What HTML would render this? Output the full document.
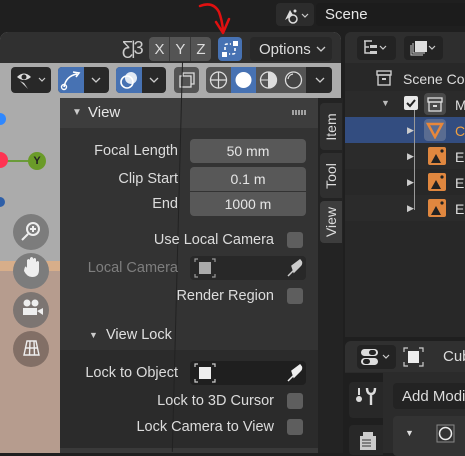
<!DOCTYPE html>
<html><head><meta charset="utf-8"><style>
*{margin:0;padding:0;box-sizing:border-box}
body{width:465px;height:453px;overflow:hidden;background:#1f1f1f;font-family:"Liberation Sans","DejaVu Sans",sans-serif;font-size:14px;color:#e0e0e0;position:relative}
.a{position:absolute}
.btn{position:absolute;border-radius:4px}
.lbl{position:absolute;text-align:right;color:#dcdcdc;font-size:14.5px}
.fld{position:absolute;background:#585858;color:#e6e6e6;text-align:center;font-size:14px;line-height:24px}
.chk{position:absolute;width:16px;height:16px;background:#5e5e5e;border-radius:3px}
.tab{position:absolute;left:320px;width:22px;background:#2f2f2f;border-radius:4px 0 0 4px}
.tab span{position:absolute;left:50%;top:50%;transform:translate(-50%,-50%) rotate(-90deg);font-size:14px;color:#ddd;white-space:nowrap}
.orow{position:absolute;left:345px;width:120px;height:26px}
.oic{position:absolute;width:18px;height:18px;background:#e0873f;border-radius:2px}
</style></head><body>
<div class="a" style="left:0;top:0;width:465px;height:31px;background:#1f1f1f"></div>
<div class="btn" style="left:276px;top:3px;width:38px;height:23px;background:#2c2c2c"></div>
<svg class="a" style="left:282px;top:5px" width="30" height="20"><path d="M3 15 L8 5 L11 10 Z" fill="#ddd"/><circle cx="11" cy="14" r="4" fill="none" stroke="#ddd" stroke-width="1.5"/><circle cx="13" cy="6" r="1.5" fill="#ddd"/><path d="M20 9 l3 3 l3 -3" fill="none" stroke="#ccc" stroke-width="1.2"/></svg>
<div class="btn" style="left:316px;top:3px;width:160px;height:23px;background:#1c1c1c;border-radius:4px 0 0 4px"></div>
<div class="a" style="left:325px;top:6px;font-size:15px;color:#e6e6e6">Scene</div>

<div class="a" style="left:0;top:32px;width:341px;height:421px;background:#ababab;border-radius:8px 8px 0 0;overflow:hidden">
  <div class="a" style="left:0;top:0;width:341px;height:31px;background:#303030"></div>
  <div class="a" style="left:0;top:238px;width:60px;height:200px;background:#b69c8e"></div>
  <div class="a" style="left:0;top:229px;width:60px;height:10px;background:#d7ae8a"></div>
</div>
<div class="a" style="left:122px;top:38px;font-size:18px;color:#ccc;letter-spacing:-2px">Ƹ|3</div>
<div class="btn" style="left:149px;top:37px;width:62px;height:24px;background:#545454"></div>
<div class="a" style="left:169px;top:37px;width:1px;height:24px;background:#3a3a3a"></div>
<div class="a" style="left:190px;top:37px;width:1px;height:24px;background:#3a3a3a"></div>
<div class="a" style="left:149px;top:41px;width:62px;font-size:15px;color:#ddd;display:flex;justify-content:space-around"><span>X</span><span>Y</span><span>Z</span></div>
<div class="btn" style="left:218px;top:37px;width:24px;height:24px;background:#4772b3"></div>
<svg class="a" style="left:218px;top:37px" width="24" height="24"><rect x="15" y="4" width="5" height="5" fill="#fff"/><rect x="4" y="15" width="5" height="5" fill="#fff"/><path d="M7 13 V9 Q7 7 9 7 H13 M17 11 V15 Q17 17 15 17 H11" fill="none" stroke="#fff" stroke-width="1.6" stroke-dasharray="3 2"/></svg>
<div class="btn" style="left:250px;top:37px;width:82px;height:24px;background:#282828"></div>
<div class="a" style="left:259px;top:41px;font-size:15px;color:#ddd">Options</div>
<svg class="a" style="left:316px;top:45px" width="10" height="8"><path d="M1 2 l4 4 l4 -4" fill="none" stroke="#ccc" stroke-width="1.3"/></svg>
<div class="btn" style="left:11px;top:67px;width:40px;height:26px;background:#282828"></div>
<svg class="a" style="left:14px;top:69px" width="36" height="22"><path d="M3 8 Q10 1 17 8 Q10 14 3 8Z" fill="#ddd"/><circle cx="10" cy="8" r="2.5" fill="#282828"/><path d="M6 12 L14 20 L10 14 Z" fill="#ddd"/><path d="M25 9 l3 3 l3 -3" fill="none" stroke="#ccc" stroke-width="1.2"/></svg>
<div class="btn" style="left:58px;top:67px;width:51px;height:26px;background:#282828"></div>
<div class="btn" style="left:58px;top:67px;width:26px;height:26px;background:#4772b3;border-radius:4px 0 0 4px"></div>
<svg class="a" style="left:58px;top:67px" width="26" height="26"><path d="M6 20 Q8 9 19 7" fill="none" stroke="#fff" stroke-width="1.6"/><path d="M15 5 L21 6 L18 10" fill="none" stroke="#fff" stroke-width="1.6"/><circle cx="6" cy="20" r="2.5" fill="none" stroke="#fff" stroke-width="1.4"/></svg>
<svg class="a" style="left:91px;top:76px" width="10" height="8"><path d="M1 2 l4 4 l4 -4" fill="none" stroke="#ccc" stroke-width="1.3"/></svg>
<div class="btn" style="left:116px;top:67px;width:50px;height:26px;background:#282828"></div>
<div class="btn" style="left:116px;top:67px;width:26px;height:26px;background:#4772b3;border-radius:4px 0 0 4px"></div>
<svg class="a" style="left:116px;top:67px" width="26" height="26"><circle cx="11" cy="15" r="6" fill="none" stroke="#fff" stroke-width="1.6"/><circle cx="15" cy="11" r="6" fill="#fff" opacity=".85"/></svg>
<svg class="a" style="left:149px;top:76px" width="10" height="8"><path d="M1 2 l4 4 l4 -4" fill="none" stroke="#ccc" stroke-width="1.3"/></svg>
<div class="btn" style="left:174px;top:67px;width:25px;height:26px;background:#545454"></div>
<svg class="a" style="left:174px;top:67px" width="25" height="26"><rect x="6" y="9" width="11" height="11" fill="none" stroke="#ddd" stroke-width="1.3"/><path d="M9 9 V6 H20 V17 H17" fill="none" stroke="#ddd" stroke-width="1.3"/></svg>
<div class="btn" style="left:206px;top:67px;width:126px;height:26px;background:#545454"></div>
<div class="a" style="left:231px;top:67px;width:25px;height:26px;background:#4772b3"></div>
<div class="a" style="left:306px;top:67px;width:26px;height:26px;background:#282828;border-radius:0 4px 4px 0"></div>
<svg class="a" style="left:206px;top:67px" width="126" height="26"><circle cx="12.5" cy="13" r="8" fill="none" stroke="#ddd" stroke-width="1.3"/><path d="M4.5 13 H20.5 M12.5 5 V21" stroke="#ddd" stroke-width="1.2"/><circle cx="37.5" cy="13" r="8" fill="#fff"/><circle cx="62.5" cy="13" r="8" fill="none" stroke="#ddd" stroke-width="1.3"/><path d="M62.5 5 A8 8 0 0 1 62.5 21 Z M54.5 13 H62.5" fill="#ddd" stroke="#ddd"/><circle cx="87.5" cy="13" r="8" fill="#444" stroke="#ddd" stroke-width="1.3"/><path d="M82 12 A6 6 0 0 1 87 7" stroke="#ddd" fill="none" stroke-width="1.3"/><path d="M110 11 l4 4 l4 -4" fill="none" stroke="#ccc" stroke-width="1.3"/></svg>

<div class="a" style="left:-6px;top:113px;width:12px;height:12px;border-radius:50%;background:#2f88ff"></div>
<div class="a" style="left:0;top:160px;width:30px;height:2px;background:#6a9b3a"></div>
<div class="a" style="left:-8px;top:152px;width:16px;height:16px;border-radius:50%;background:#ff3352"></div>
<div class="a" style="left:28px;top:152px;width:18px;height:18px;border-radius:50%;background:#6a9b28;color:#222;font-size:11px;text-align:center;line-height:18px;font-weight:bold">Y</div>
<div class="a" style="left:-5px;top:197px;width:10px;height:10px;border-radius:50%;background:#2e5fa8"></div>
<div class="a" style="left:13px;top:214px;width:36px;height:36px;border-radius:50%;background:#7c7c7c"></div>
<div class="a" style="left:13px;top:253px;width:36px;height:36px;border-radius:50%;background:#7c7c7c"></div>
<div class="a" style="left:13px;top:292px;width:36px;height:36px;border-radius:50%;background:#7c7572"></div>
<div class="a" style="left:13px;top:331px;width:36px;height:36px;border-radius:50%;background:#826f66"></div>
<svg class="a" style="left:13px;top:214px" width="36" height="160"><circle cx="20" cy="15" r="6" fill="none" stroke="#eee" stroke-width="2"/><path d="M20 12v6M17 15h6M15 20l-6 6" stroke="#eee" stroke-width="2"/><path d="M11 57 Q12 50 14 54 V46 Q16 44 17 46 V52 V44 Q19 42 20 44 V52 V45 Q22 43 23 45 V53 V48 Q25 46 26 48 V56 Q26 63 19 63 Q14 63 11 57Z" fill="#eee"/><circle cx="14" cy="89" r="3.5" fill="#eee"/><circle cx="22" cy="89" r="3.5" fill="#eee"/><rect x="10" y="94" width="14" height="7" fill="#eee"/><path d="M24 97 l6 -3 v7z" fill="#eee"/><path d="M11 141 L14 127 H23 L26 141 Z M12.5 134 H24.5 M17 127 L16.5 141 M21 127 L21.5 141" fill="none" stroke="#eee" stroke-width="1.4"/></svg>

<div class="a" style="left:60px;top:98px;width:258px;height:355px;background:#333333"></div>
<div class="a" style="left:60px;top:98px;width:258px;height:30px;background:#3d3d3d"></div>
<div class="a" style="left:60px;top:350px;width:258px;height:98px;background:#2b2b2b"></div>
<div class="a" style="left:60px;top:448px;width:258px;height:5px;background:#3a3a3a"></div>
<div class="a" style="left:182px;top:62px;width:1px;height:390px;background:#222;transform:rotate(1.5deg);transform-origin:top"></div>
<div class="a" style="left:72px;top:107px;font-size:10px;color:#ccc">▼</div>
<div class="a" style="left:88px;top:104px;font-size:15px;color:#e6e6e6">View</div>
<div class="a" style="left:292px;top:110px;width:14px;height:5px;background:repeating-linear-gradient(90deg,#bbb 0 2px,transparent 2px 3px);opacity:.8"></div>
<div class="lbl" style="left:60px;top:143px;width:118px">Focal Length</div>
<div class="fld" style="left:190px;top:139px;width:116px;height:24px;border-radius:4px">50 mm</div>
<div class="lbl" style="left:60px;top:171px;width:118px">Clip Start</div>
<div class="fld" style="left:190px;top:167px;width:116px;height:24px;border-radius:4px 4px 0 0">0.1 m</div>
<div class="lbl" style="left:60px;top:196px;width:118px">End</div>
<div class="fld" style="left:190px;top:192px;width:116px;height:24px;border-radius:0 0 4px 4px">1000 m</div>
<div class="lbl" style="left:60px;top:232px;width:214px">Use Local Camera</div>
<div class="chk" style="left:287px;top:232px"></div>
<div class="lbl" style="left:60px;top:260px;width:118px;color:#7e7e7e">Local Camera</div>
<div class="btn" style="left:190px;top:256px;width:116px;height:24px;background:#282828"></div>
<div class="lbl" style="left:60px;top:288px;width:214px">Render Region</div>
<div class="chk" style="left:287px;top:288px"></div>
<div class="a" style="left:89px;top:330px;font-size:9px;color:#ccc">▼</div>
<div class="a" style="left:106px;top:327px;font-size:14.5px;color:#e0e0e0">View Lock</div>
<div class="lbl" style="left:60px;top:365px;width:118px">Lock to Object</div>
<div class="btn" style="left:190px;top:361px;width:116px;height:24px;background:#1f1f1f"></div>
<div class="lbl" style="left:60px;top:393px;width:214px">Lock to 3D Cursor</div>
<div class="chk" style="left:287px;top:393px"></div>
<div class="lbl" style="left:60px;top:419px;width:214px">Lock Camera to View</div>
<div class="chk" style="left:287px;top:419px"></div>
<svg class="a" style="left:190px;top:256px" width="116" height="130"><g><rect x="9" y="6" width="12" height="12" fill="#aaa"/><path d="M5 6V3h3M22 3h3v3M25 18v3h-3M8 21H5v-3" fill="none" stroke="#999" stroke-width="1.2"/><path d="M98 20 L104 14 M102 10 L110 4 Q113 7 110 10 L104 16 Z" stroke="#ccc" fill="#ccc" stroke-width="1.5"/></g><g transform="translate(0,105)"><rect x="9" y="6" width="12" height="12" fill="#eee"/><path d="M5 6V3h3M22 3h3v3M25 18v3h-3M8 21H5v-3" fill="none" stroke="#ccc" stroke-width="1.2"/><path d="M98 20 L104 14 M102 10 L110 4 Q113 7 110 10 L104 16 Z" stroke="#eee" fill="#eee" stroke-width="1.5"/></g></svg>

<div class="a" style="left:318px;top:98px;width:25px;height:355px;background:#232323"></div>
<div class="tab" style="top:103px;height:47px"><span>Item</span></div>
<div class="tab" style="top:153px;height:45px"><span>Tool</span></div>
<div class="tab" style="top:201px;height:42px;background:#3d3d3d"><span>View</span></div>

<div class="a" style="left:345px;top:32px;width:120px;height:305px;background:#282828;border-radius:6px 0 0 0"></div>
<div class="a" style="left:345px;top:32px;width:120px;height:31px;background:#2e2e2e;border-radius:6px 0 0 0"></div>
<div class="btn" style="left:357px;top:36px;width:39px;height:24px;background:#232323"></div>
<div class="btn" style="left:404px;top:36px;width:39px;height:24px;background:#232323"></div>
<svg class="a" style="left:357px;top:36px" width="90" height="24"><path d="M7 5h8M8 5v12h5M8 11h4" stroke="#ccc" fill="none" stroke-width="1.5"/><rect x="13" y="9" width="7" height="3" fill="#ccc"/><rect x="13" y="15" width="7" height="3" fill="#ccc"/><path d="M23 10l3 3 3-3" stroke="#ccc" fill="none" stroke-width="1.2"/><rect x="58" y="5" width="12" height="11" fill="#ddd"/><path d="M54 9v10h12M56 7v10h12" stroke="#ccc" fill="none"/><path d="M72 10l3 3 3-3" stroke="#ccc" fill="none" stroke-width="1.2"/></svg>
<div class="orow" style="top:91px;background:#2b2b2b"></div>
<div class="orow" style="top:117px;background:#334d80"></div>
<div class="orow" style="top:143px;background:#2b2b2b"></div>
<div class="orow" style="top:195px;background:#2b2b2b"></div>
<svg class="a" style="left:374px;top:68px" width="20" height="20"><rect x="3" y="3" width="14" height="4" fill="none" stroke="#ccc" stroke-width="1.4"/><rect x="4" y="7" width="12" height="10" fill="none" stroke="#ccc" stroke-width="1.4"/><rect x="8" y="10" width="4" height="2" fill="#ccc"/></svg>
<div class="a" style="left:403px;top:71px;font-size:14px;color:#ddd;white-space:nowrap">Scene Co</div>
<div class="a" style="left:381px;top:98px;font-size:9px;color:#bbb">▼</div>
<div class="a" style="left:404px;top:96px;width:14px;height:14px;background:#e8e8e8;border-radius:2px"></div>
<svg class="a" style="left:404px;top:96px" width="14" height="14"><path d="M3 7l3 3 5-6" fill="none" stroke="#222" stroke-width="2"/></svg>
<div class="a" style="left:424px;top:93px;width:22px;height:22px;background:#4a4a4a;border-radius:4px"></div>
<svg class="a" style="left:426px;top:95px" width="18" height="18"><rect x="2" y="3" width="14" height="4" fill="none" stroke="#ddd" stroke-width="1.3"/><rect x="3" y="7" width="12" height="9" fill="none" stroke="#ddd" stroke-width="1.3"/><rect x="7" y="10" width="4" height="2" fill="#ddd"/></svg>
<div class="a" style="left:455px;top:97px;font-size:14px;color:#ddd">M</div>
<div class="a" style="left:414px;top:110px;width:1px;height:100px;background:#999"></div>
<div class="a" style="left:424px;top:119px;width:22px;height:22px;background:#5a6c91;border-radius:4px"></div>
<svg class="a" style="left:426px;top:121px" width="18" height="18"><path d="M2 3h14L9 16Z" fill="none" stroke="#e8873a" stroke-width="2.5"/></svg>
<div class="a" style="left:455px;top:123px;font-size:14px;color:#f0a040">C</div>
<div class="oic" style="left:428px;top:147px"></div><div class="oic" style="left:428px;top:173px"></div><div class="oic" style="left:428px;top:199px"></div>
<svg class="a" style="left:428px;top:147px" width="18" height="70"><g id="m"><path d="M3 16 L8 7 L13 16Z" fill="#222"/><circle cx="14" cy="4" r="1.6" fill="#222"/></g><use href="#m" y="26"/><use href="#m" y="52"/></svg>
<div class="a" style="left:455px;top:149px;font-size:14px;color:#ddd">E</div>
<div class="a" style="left:455px;top:175px;font-size:14px;color:#ddd">E</div>
<div class="a" style="left:455px;top:201px;font-size:14px;color:#ddd">E</div>
<div class="a" style="left:407px;top:125px;font-size:9px;color:#ccc">▶</div>
<div class="a" style="left:407px;top:151px;font-size:9px;color:#ccc">▶</div>
<div class="a" style="left:407px;top:177px;font-size:9px;color:#ccc">▶</div>
<div class="a" style="left:407px;top:203px;font-size:9px;color:#ccc">▶</div>

<div class="a" style="left:345px;top:341px;width:120px;height:112px;background:#2b2b2b;border-radius:6px 0 0 0"></div>
<div class="a" style="left:345px;top:341px;width:120px;height:31px;background:#303030;border-radius:6px 0 0 0"></div>
<div class="btn" style="left:357px;top:345px;width:39px;height:24px;background:#232323"></div>
<svg class="a" style="left:357px;top:345px" width="108" height="24"><rect x="4" y="4" width="17" height="7" rx="3.5" fill="#ddd"/><rect x="4" y="13" width="17" height="7" rx="3.5" fill="#ddd"/><rect x="12" y="5" width="7" height="5" rx="2.5" fill="#232323"/><rect x="6" y="14" width="7" height="5" rx="2.5" fill="#232323"/><path d="M26 10l3 3 3-3" stroke="#ccc" fill="none" stroke-width="1.2"/><rect x="51" y="6" width="11" height="12" fill="#eee"/><path d="M47 7V3h4M62 3h4v4M66 17v4h-4M51 21h-4v-4" fill="none" stroke="#ccc" stroke-width="1.2"/></svg>
<div class="a" style="left:443px;top:348px;font-size:15px;color:#ddd">Cub</div>
<div class="a" style="left:345px;top:373px;width:38px;height:80px;background:#1f1f1f"></div>
<div class="btn" style="left:349px;top:382px;width:34px;height:36px;background:#282828;border-radius:4px 0 0 4px"></div>
<div class="btn" style="left:349px;top:425px;width:34px;height:30px;background:#282828;border-radius:4px 0 0 4px"></div>
<svg class="a" style="left:349px;top:382px" width="34" height="72"><path d="M10 6v7" stroke="#ddd" stroke-width="2"/><circle cx="10" cy="17" r="3" fill="#ddd"/><path d="M18 6 Q18 12 22 12 Q26 12 26 6 M22 12v11" stroke="#ddd" stroke-width="2.4" fill="none"/><rect x="11" y="54" width="16" height="14" fill="#ccc"/><rect x="14" y="50" width="10" height="4" fill="#ccc"/><path d="M13 58h9M13 61h9M13 64h9" stroke="#333"/></svg>
<div class="a" style="left:383px;top:373px;width:82px;height:80px;background:#2b2b2b"></div>
<div class="btn" style="left:393px;top:383px;width:80px;height:26px;background:#232323"></div>
<div class="a" style="left:402px;top:388px;font-size:15px;color:#ddd;white-space:nowrap">Add Modi</div>
<div class="btn" style="left:393px;top:416px;width:80px;height:40px;background:#333"></div>
<div class="a" style="left:405px;top:428px;font-size:9px;color:#ddd">▼</div>
<svg class="a" style="left:436px;top:424px" width="20" height="20"><rect x="1" y="1" width="17" height="17" fill="none" stroke="#888"/><circle cx="9.5" cy="9.5" r="6" fill="none" stroke="#eee" stroke-width="1.5"/></svg>

<svg class="a" style="left:195px;top:0" width="45" height="40"><path d="M5 6 Q18 1 24 12 Q27 20 28 30" fill="none" stroke="#e01010" stroke-width="2.5" stroke-linecap="round"/><path d="M21 22 L28 33 L34 19" fill="none" stroke="#e01010" stroke-width="2.5" stroke-linecap="round" stroke-linejoin="round"/></svg>
</body></html>
